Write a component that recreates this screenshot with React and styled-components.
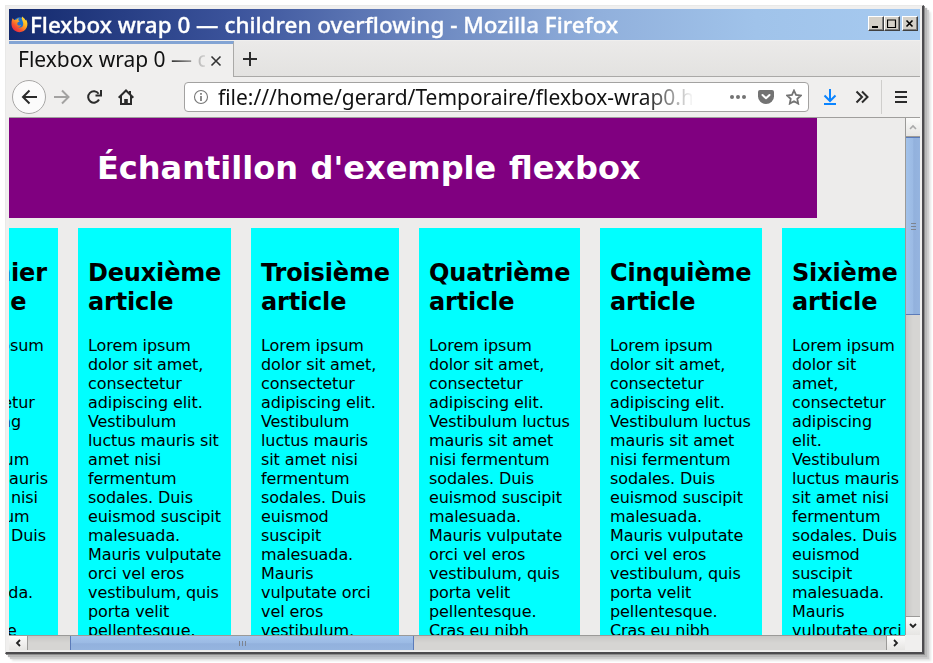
import React from "react";
import styled, { createGlobalStyle, css } from "styled-components";

const Global = createGlobalStyle`
  * { box-sizing: border-box; }
  html, body { margin: 0; background: #fff; overflow: hidden; }
  svg { display: block; flex: none; }
`;

const Desktop = styled.div`
  width: 933px;
  height: 663px;
  padding: 5px 0 0 5px;
  background: #fff;
  overflow: hidden;
`;

const Frame = styled.div`
  width: 919px;
  height: 649px;
  padding: 2px;
  border-style: solid;
  border-width: 1px 2px 2px 1px;
  border-color: #e9e9e8 #4c4b4e #4c4b4e #e9e9e8;
  background: #f0efee;
  box-shadow: 1px 1px 0 #8c8c8c, 3px 3px 1px #b9b9b9, 5px 5px 1px #cfcfcf, 7px 7px 2px #e6e6e6;
`;

const Window = styled.div`
  width: 911px;
  height: 642px;
  margin: 1px 0 0 1px;
  display: flex;
  flex-direction: column;
  background: #edeceb;
  overflow: hidden;
`;

const TitleBar = styled.div`
  height: 31px;
  flex: none;
  display: flex;
  align-items: center;
  padding: 0 2px 0 2px;
  background: linear-gradient(90deg, #13296d 0%, #3c549c 25%, #6883bd 44%, #91b0dc 65%, #a0c3ea 82%, #a6caf0 100%);
`;

const Label = styled.span`
  display: block;
  flex: none;
  margin-top: ${(p) => p.$shift || 0}px;
  white-space: pre;
  font-family: "Noto Sans", "Open Sans", sans-serif;
  font-size: ${(p) => p.$size}px;
  font-weight: ${(p) => p.$weight || 400};
  line-height: 28px;
  color: ${(p) => p.$color || "#111"};
  -webkit-text-stroke: ${(p) => p.$stroke || 0}px currentColor;
  transform: scaleX(${(p) => p.$stretch || 1});
  transform-origin: 0 50%;
`;

const Fill = styled.div`
  flex: 1;
`;

const WinButton = styled.div`
  width: 16px;
  height: 15px;
  margin: 0 0 2px ${(p) => p.$gap || 0}px;
  display: flex;
  align-items: center;
  justify-content: center;
  background: #d4d0c8;
  border: 1px solid;
  border-color: #fff #404040 #404040 #fff;
  box-shadow: inset -1px -1px 0 #808080;
`;

const TabStrip = styled.div`
  height: 37px;
  flex: none;
  display: flex;
  border-top: 1px solid #f0efee;
  background: linear-gradient(#ebeae9, #e3e2e0);
`;

const Tab = styled.div`
  width: 225px;
  display: flex;
  align-items: center;
  padding-left: 9px;
  border-top: 3px solid #83a4d4;
  border-right: 1px solid #aaa9a7;
  background: #f0efee;
`;

const TabTitle = styled.div`
  width: 187px;
  margin-top: -5px;
  overflow: hidden;
  mask-image: linear-gradient(90deg, #000 146px, transparent 192px);
`;

const TabRest = styled.div`
  flex: 1;
  display: flex;
  align-items: center;
  padding-left: 9px;
  border-bottom: 1px solid #aaa9a7;
`;

const NavBar = styled.div`
  height: 41px;
  flex: none;
  display: flex;
  align-items: center;
  padding: 0 12px 0 3px;
  background: #f0efee;
  border-bottom: 1px solid #a09f9d;
`;

const BackButton = styled.div`
  width: 34px;
  height: 34px;
  flex: none;
  display: flex;
  align-items: center;
  justify-content: center;
  border: 1px solid #a8a7a6;
  border-radius: 50%;
  background: #fbfbfb;
`;

const Icon = styled.div`
  flex: none;
  margin-left: ${(p) => p.$gap || 0}px;
`;

const UrlBar = styled.div`
  width: 625px;
  height: 30px;
  flex: none;
  margin-left: 50px;
  display: flex;
  align-items: center;
  padding: 0 6px 0 8px;
  border: 1px solid #a3a2a1;
  border-radius: 4px;
  background: #fff;
`;

const UrlText = styled.div`
  width: 474px;
  margin: -2px 0 0 9px;
  overflow: hidden;
  mask-image: linear-gradient(90deg, #000 426px, transparent 476px);
`;

const Separator = styled.div`
  width: 1px;
  height: 34px;
  flex: none;
  margin: 0 13px 0 12px;
  background: #cfcecc;
`;

const Viewport = styled.div`
  height: 532px;
  flex: none;
  display: grid;
  grid-template-columns: 896px 15px;
  grid-template-rows: 517px 15px;
`;

const Page = styled.div`
  overflow: hidden;
  background: #edeceb;
  color: #000;
  font-family: "DejaVu Sans", sans-serif;
`;

const Banner = styled.header`
  width: 808px;
  height: 100px;
  padding-left: 88px;
  display: flex;
  align-items: center;
  background: purple;
  color: #fff;

  h1 {
    margin: 0;
    font-size: 32px;
    line-height: 37px;
    word-spacing: 1.5px;
  }
`;

const Articles = styled.div`
  display: flex;
  gap: 20px;
  width: 1100px;
  margin: 10px 0 0 -78px;
`;

const Article = styled.article`
  width: ${(p) => p.$width}px;
  height: 500px;
  flex: none;
  padding: 31px 10px 0;
  background: cyan;
  white-space: pre;

  h2 {
    margin: 0 0 19px;
    font-size: 24px;
    line-height: 29px;
    letter-spacing: -0.17px;
  }

  p {
    margin: 0;
    font-size: 16px;
    line-height: 19px;
    letter-spacing: -0.09px;
  }
`;

const vertical = css`
  flex-direction: column;
  border-left: 1px solid #9b9a98;
  background: linear-gradient(90deg, #c8c7c5, #d6d5d3 50%);
`;

const horizontal = css`
  border-top: 1px solid #9b9a98;
  background: linear-gradient(#c8c7c5, #d6d5d3 50%);
`;

const ScrollBar = styled.div`
  display: flex;
  ${(p) => (p.$vertical ? vertical : horizontal)}
`;

const ScrollButton = styled.div`
  width: ${(p) => p.$w}px;
  height: ${(p) => p.$h}px;
  flex: none;
  display: flex;
  align-items: center;
  justify-content: center;
  border: 0 solid #9b9a98;
  border-width: ${(p) => p.$edge};
  background: linear-gradient(#fbfbfa, #e6e5e3);
`;

const Thumb = styled.div`
  flex: none;
  display: flex;
  align-items: center;
  justify-content: center;
  border: 0 solid #5b7bb9;
  ${(p) =>
    p.$vertical
      ? "height: 178px; border-width: 1px 0; background: linear-gradient(90deg, #a2c2ea, #9bbae4 50%, #92b1dd 55%, #95b4df);"
      : "width: 344px; margin-left: 42px; border-width: 0 1px; background: linear-gradient(#a5c4eb, #9bbae4 50%, #92b1dd 55%, #95b4df);"}
`;

const Corner = styled.div`
  background: #f0efee;
`;

const articles = [
  {
    width: 127,
    title: "Premier\narticle",
    text: "Lorem ipsum\ndolor sit\namet,\nconsectetur\nadipiscing\nelit.\nVestibulum\nluctus mauris\nsit amet nisi\nfermentum\nsodales. Duis\neuismod\nsuscipit\nmalesuada.\nMauris\nvulputate",
  },
  {
    width: 153,
    title: "Deuxième\narticle",
    text: "Lorem ipsum\ndolor sit amet,\nconsectetur\nadipiscing elit.\nVestibulum\nluctus mauris sit\namet nisi\nfermentum\nsodales. Duis\neuismod suscipit\nmalesuada.\nMauris vulputate\norci vel eros\nvestibulum, quis\nporta velit\npellentesque.",
  },
  {
    width: 148,
    title: "Troisième\narticle",
    text: "Lorem ipsum\ndolor sit amet,\nconsectetur\nadipiscing elit.\nVestibulum\nluctus mauris\nsit amet nisi\nfermentum\nsodales. Duis\neuismod\nsuscipit\nmalesuada.\nMauris\nvulputate orci\nvel eros\nvestibulum,",
  },
  {
    width: 161,
    title: "Quatrième\narticle",
    text: "Lorem ipsum\ndolor sit amet,\nconsectetur\nadipiscing elit.\nVestibulum luctus\nmauris sit amet\nnisi fermentum\nsodales. Duis\neuismod suscipit\nmalesuada.\nMauris vulputate\norci vel eros\nvestibulum, quis\nporta velit\npellentesque.\nCras eu nibh",
  },
  {
    width: 162,
    title: "Cinquième\narticle",
    text: "Lorem ipsum\ndolor sit amet,\nconsectetur\nadipiscing elit.\nVestibulum luctus\nmauris sit amet\nnisi fermentum\nsodales. Duis\neuismod suscipit\nmalesuada.\nMauris vulputate\norci vel eros\nvestibulum, quis\nporta velit\npellentesque.\nCras eu nibh",
  },
  {
    width: 128,
    title: "Sixième\narticle",
    text: "Lorem ipsum\ndolor sit\namet,\nconsectetur\nadipiscing\nelit.\nVestibulum\nluctus mauris\nsit amet nisi\nfermentum\nsodales. Duis\neuismod\nsuscipit\nmalesuada.\nMauris\nvulputate orci",
  },
];

const Line = ({ w = 16, h = 16, d, color = "#2b2b2b", sw = 2 }) => (
  <svg width={w} height={h} viewBox={`0 0 ${w} ${h}`}>
    <path d={d} fill="none" stroke={color} strokeWidth={sw} />
  </svg>
);

const FirefoxLogo = () => (
  <svg width="17" height="17" viewBox="0 0 17 17">
    <defs>
      <linearGradient id="flame" x1="1" y1="0" x2="0.2" y2="1">
        <stop offset="0" stopColor="#fff04a" />
        <stop offset="0.4" stopColor="#ffb51f" />
        <stop offset="0.75" stopColor="#f5502f" />
        <stop offset="1" stopColor="#e3204b" />
      </linearGradient>
    </defs>
    <circle cx="8.6" cy="7.4" r="6.2" fill="#1d72d0" />
    <path
      d="M1.6 2.2 3.3 4 5.4 3.7 7.7 1.8 7.2 4.3 8.7 5.3 6.6 6.5 6.2 8.2C7 9.5 8.6 9.9 10 9 9.6 10.4 8.4 11.2 7 11 10 12.6 12.4 10.7 12.2 7.5 12 5.5 11.2 4.4 10.6 2.2L11.2.5C12.4 1.6 14.2 3 14.6 4.6L15.1 3.5C16.6 6 16.9 9 15.7 11.6 14.3 14.7 11.6 16.2 8.5 16.2 4.2 16.2.6 13 .5 8.6.4 6.2.6 4.2 1.6 2.2Z"
      fill="url(#flame)"
    />
  </svg>
);

export default function App() {
  return (
    <Desktop>
      <Global />
      <Frame>
        <Window>
          <TitleBar>
            <FirefoxLogo />
            <Icon $gap={2} />
            <Label $size={22} $weight={500} $color="#fff" $stretch={1.02} $stroke={0.3} $shift={-1}>
              Flexbox wrap 0 — children overflowing - Mozilla Firefox
            </Label>
            <Fill />
            <WinButton>
              <Line w={10} h={10} d="M1 8h6" color="#000" />
            </WinButton>
            <WinButton>
              <Line w={10} h={10} d="M0 1h9M.5 1v7.5h8V1" color="#000" sw={1.2} />
            </WinButton>
            <WinButton $gap={2}>
              <Line w={10} h={10} d="M1.5 1.5l6 6M7.5 1.5l-6 6" color="#000" sw={1.6} />
            </WinButton>
          </TitleBar>
          <TabStrip>
            <Tab>
              <TabTitle>
                <Label $size={22} $stretch={0.955}>Flexbox wrap 0 — children</Label>
              </TabTitle>
              <Icon $gap={5}>
                <Line w={12} h={12} d="M1.5 1.5l9 9M10.5 1.5l-9 9" color="#333" sw={1.6} />
              </Icon>
            </Tab>
            <TabRest>
              <Line w={14} h={14} d="M7 0v14M0 7h14" />
            </TabRest>
          </TabStrip>
          <NavBar>
            <BackButton>
              <Line d="M16 8H1.5M8.5 1.5L2 8l6.5 6.5" />
            </BackButton>
            <Icon $gap={8}>
              <Line d="M0 8h14.5M8 1.5L14.5 8 8 14.5" color="#a3a2a1" />
            </Icon>
            <Icon $gap={16}>
              <svg width="16" height="16" viewBox="0 0 16 16">
                <path d="M12.6 4.8A5.7 5.7 0 1 0 13 10.5M15 1v5.5H9.5" fill="none" stroke="#2b2b2b" strokeWidth="2" />
              </svg>
            </Icon>
            <Icon $gap={16}>
              <svg width="16" height="16" viewBox="0 0 16 16">
                <path d="M.7 8.7 8 1.5l7.3 7.2M3 7v8h10V7" fill="none" stroke="#2b2b2b" strokeWidth="2" />
                <path d="M6.2 15v-5h3.6v5zM11 2h2v4l-2-2z" fill="#2b2b2b" />
              </svg>
            </Icon>
            <UrlBar>
              <svg width="16" height="16" viewBox="0 0 16 16">
                <circle cx="8" cy="8" r="6.5" fill="none" stroke="#777" strokeWidth="1.1" />
                <path d="M8 7v5M8 4v1.7" stroke="#777" strokeWidth="1.7" />
              </svg>
              <UrlText>
                <Label $size={22} $stretch={0.953}>file:///home/gerard/Temporaire/flexbox-wrap0.html</Label>
              </UrlText>
              <Fill />
              <svg width="16" height="16" viewBox="0 0 16 16" fill="#737373">
                <circle cx="2" cy="8" r="2" />
                <circle cx="8" cy="8" r="2" />
                <circle cx="14" cy="8" r="2" />
              </svg>
              <Icon $gap={12}>
                <svg width="16" height="16" viewBox="0 0 16 16">
                  <path d="M2 1h12a2 2 0 0 1 2 2v4.5a8 7.5 0 0 1-16 0V3a2 2 0 0 1 2-2z" fill="#737373" />
                  <path d="M4.5 6L8 9.3 11.5 6" fill="none" stroke="#fff" strokeWidth="2" strokeLinecap="round" strokeLinejoin="round" />
                </svg>
              </Icon>
              <Icon $gap={12}>
                <Line
                  d="M8 1.5l2 4.4 4.9.6-3.6 3.3.9 4.8L8 12.2l-4.2 2.4.9-4.8L1.1 6.5 6 5.9z"
                  color="#737373"
                  sw={1.8}
                />
              </Icon>
            </UrlBar>
            <Icon $gap={14}>
              <Line w={14} d="M7 0v12M1.5 6.5L7 12l5.5-5.5M1 15h12" color="#0a84ff" />
            </Icon>
            <Icon $gap={18}>
              <Line w={14} h={14} d="M1.5 1.5L7 7l-5.5 5.5M7 1.5L12.5 7 7 12.5" />
            </Icon>
            <Separator />
            <Line w={12} h={14} d="M0 2h12M0 7h12M0 12h12" />
          </NavBar>
          <Viewport>
            <Page>
              <Banner>
                <h1>Échantillon d'exemple flexbox</h1>
              </Banner>
              <Articles>
                {articles.map((a) => (
                  <Article key={a.title} $width={a.width}>
                    <h2>{a.title}</h2>
                    <p>{a.text}</p>
                  </Article>
                ))}
              </Articles>
            </Page>
            <ScrollBar $vertical>
              <ScrollButton $w={14} $h={19} $edge="0 0 1px 0">
                <Line w={8} h={6} d="M1 5l3-3 3 3" color="#aaa" sw={1.6} />
              </ScrollButton>
              <Thumb $vertical>
                <Line w={5} h={7} d="M0 .5h5M0 3.5h5M0 6.5h5" color="#7d8490" sw={1} />
              </Thumb>
              <Fill />
              <ScrollButton $w={14} $h={19} $edge="1px 0 0 0">
                <Line w={8} h={6} d="M1 1l3 3 3-3" color="#222" sw={1.8} />
              </ScrollButton>
            </ScrollBar>
            <ScrollBar>
              <ScrollButton $w={19} $h={14} $edge="0 1px 0 0">
                <Line w={6} h={8} d="M5 1L2 4l3 3" color="#222" sw={1.8} />
              </ScrollButton>
              <Thumb>
                <Line w={7} h={5} d="M.5 0v5M3.5 0v5M6.5 0v5" color="#7d8490" sw={1} />
              </Thumb>
              <Fill />
              <ScrollButton $w={19} $h={14} $edge="0 0 0 1px">
                <Line w={6} h={8} d="M1 1l3 3-3 3" color="#222" sw={1.8} />
              </ScrollButton>
            </ScrollBar>
            <Corner />
          </Viewport>
        </Window>
      </Frame>
    </Desktop>
  );
}
